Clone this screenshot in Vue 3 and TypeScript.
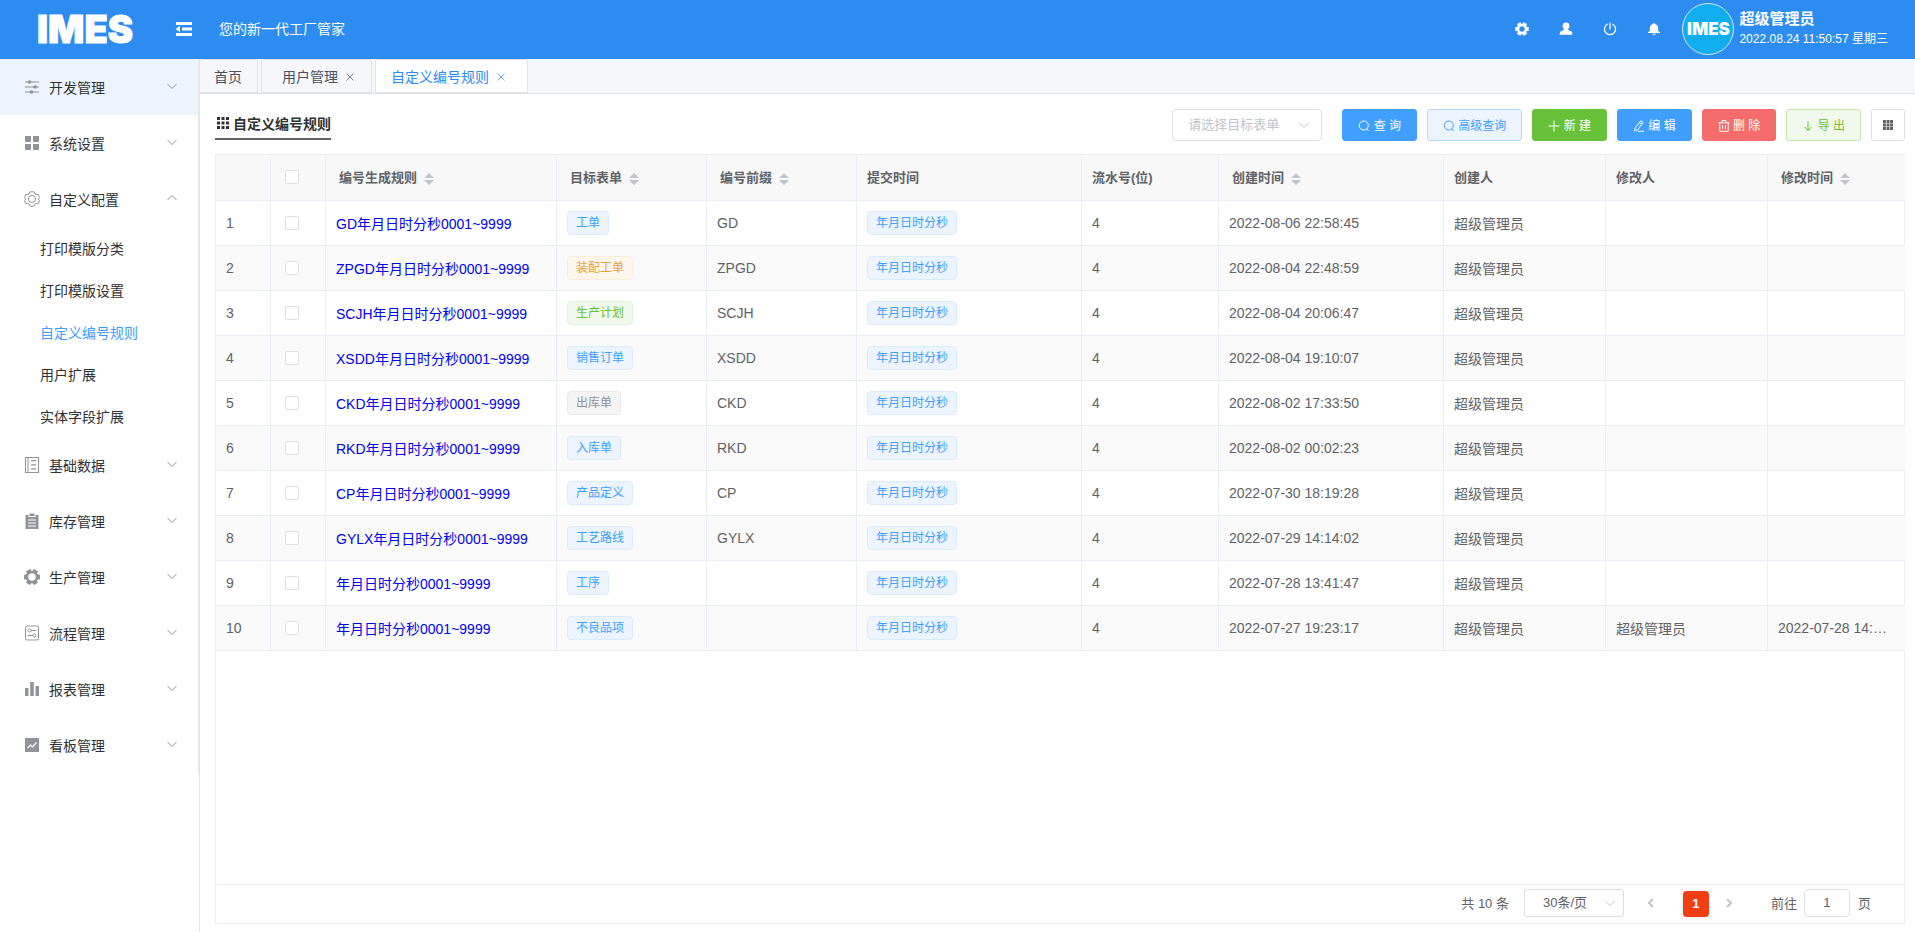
<script setup lang="ts">
import { ref } from 'vue'

interface Row {
  rule: string
  form: string
  kind: string
  prefix: string
  created: string
  modifier: string
  modified: string
}

interface MenuItem {
  label: string
  icon: string
  children?: string[]
}

const menu: MenuItem[] = [
  { label: '开发管理', icon: 'sliders' },
  { label: '系统设置', icon: 'tiles' },
  {
    label: '自定义配置',
    icon: 'gearLine',
    children: ['打印模版分类', '打印模版设置', '自定义编号规则', '用户扩展', '实体字段扩展'],
  },
  { label: '基础数据', icon: 'book' },
  { label: '库存管理', icon: 'clipboard' },
  { label: '生产管理', icon: 'gear' },
  { label: '流程管理', icon: 'flow' },
  { label: '报表管理', icon: 'bars' },
  { label: '看板管理', icon: 'board' },
]

const gearTeeth = [30, 90, 150, 210, 270, 330]

const columns = [
  { label: '编号生成规则', sortable: true },
  { label: '目标表单', sortable: true },
  { label: '编号前缀', sortable: true },
  { label: '提交时间', sortable: false },
  { label: '流水号(位)', sortable: false },
  { label: '创建时间', sortable: true },
  { label: '创建人', sortable: false },
  { label: '修改人', sortable: false },
  { label: '修改时间', sortable: true },
]

const make = (prefix: string, rule: string, form: string, kind: string, created: string, modifier = '', modified = ''): Row => ({
  prefix, rule, form, kind, created, modifier, modified,
})

const rows: Row[] = [
  make('GD', 'GD年月日时分秒0001~9999', '工单', 'primary', '2022-08-06 22:58:45'),
  make('ZPGD', 'ZPGD年月日时分秒0001~9999', '装配工单', 'warning', '2022-08-04 22:48:59'),
  make('SCJH', 'SCJH年月日时分秒0001~9999', '生产计划', 'success', '2022-08-04 20:06:47'),
  make('XSDD', 'XSDD年月日时分秒0001~9999', '销售订单', 'primary', '2022-08-04 19:10:07'),
  make('CKD', 'CKD年月日时分秒0001~9999', '出库单', 'info', '2022-08-02 17:33:50'),
  make('RKD', 'RKD年月日时分秒0001~9999', '入库单', 'primary', '2022-08-02 00:02:23'),
  make('CP', 'CP年月日时分秒0001~9999', '产品定义', 'primary', '2022-07-30 18:19:28'),
  make('GYLX', 'GYLX年月日时分秒0001~9999', '工艺路线', 'primary', '2022-07-29 14:14:02'),
  make('', '年月日时分秒0001~9999', '工序', 'primary', '2022-07-28 13:41:47'),
  make('', '年月日时分秒0001~9999', '不良品项', 'primary', '2022-07-27 19:23:17', '超级管理员', '2022-07-28 14:…'),
]

const target = ref('')
const page = ref('1')
</script>

<template>
  <div class="app">
    <header class="top">
      <div class="logo">IMES</div>
      <button class="bare" aria-label="折叠菜单">
        <svg width="18" height="14" viewBox="0 0 18 14" fill="#fff">
          <path d="M1 0h16v3H1zM7 5.5h10v3H7zM1 11h16v3H1zM5 3.8v6.4L.5 7z" />
        </svg>
      </button>
      <span class="slogan">您的新一代工厂管家</span>
      <nav class="tools">
        <button class="bare" aria-label="设置">
          <svg width="14" height="14" viewBox="0 0 16 16">
            <g fill="#fff"><rect v-for="a in gearTeeth" :key="a" x="5.6" y="0.3" width="4.8" height="4" rx="0.8" :transform="`rotate(${a} 8 8)`" /></g>
            <circle cx="8" cy="8" r="4.5" fill="none" stroke="#fff" stroke-width="2.8" />
          </svg>
        </button>
        <button class="bare" aria-label="用户">
          <svg width="14" height="14" viewBox="0 0 14 14" fill="#fff">
            <circle cx="7" cy="4" r="3.4" /><path d="M5 6.5h4l.4 1.6 3 1.5c.7.4.9 1.4.9 3.2H.7c0-1.8.2-2.8.9-3.2l3-1.5z" />
          </svg>
        </button>
        <button class="bare" aria-label="退出">
          <svg width="14" height="14" viewBox="0 0 14 14" fill="none" stroke="#fff" stroke-width="1.2" stroke-linecap="round">
            <path d="M7 .8v6.4M4.200 2.200a5.600 5.600 0 1 0 5.600 0" />
          </svg>
        </button>
        <button class="bare" aria-label="消息">
          <svg width="14" height="14" viewBox="0 0 14 14" fill="#fff">
            <path d="M6.300 1h1.400v1C10 2.300 11.200 4 11.200 6.200V9l1.800 1.200v.8H1v-.8L2.800 9V6.200C2.800 4 4 2.300 6.300 2zM5.300 11.800h3.400c-.2 1.600-3.200 1.600-3.400 0z" />
          </svg>
        </button>
      </nav>
      <div class="avatar">IMES</div>
      <div class="who">
        <strong>超级管理员</strong>
        <span>2022.08.24 11:50:57 星期三</span>
      </div>
    </header>

    <div class="body">
      <aside class="side">
        <ul class="menu">
          <li v-for="(m, i) in menu" :key="m.label">
            <button class="item" :class="{ hover: i === 0 }">
              <svg class="ico" width="16" height="16" viewBox="0 0 16 16" fill="#909399">
                <template v-if="m.icon === 'sliders'">
                  <path d="M1 2.500h14v1H1zM1 7.500h14v1H1zM1 12.500h14v1H1z" />
                  <circle cx="5.500" cy="3" r="1.800" /><circle cx="11" cy="8" r="1.800" /><circle cx="7.500" cy="13" r="1.800" />
                </template>
                <path v-else-if="m.icon === 'tiles'" d="M1 1h6v6H1zM9 1h6v6H9zM1 9h6v6H1zM9 9h6v6H9z" />
                <g v-else-if="m.icon === 'gearLine'" fill="none" stroke="#909399">
                  <path d="M6 .8h4l.8 1.900 1.500.9 2-.2 1.200 3.100L14.300 8l1.200 1.500-1.200 3.100-2-.2-1.500.9-.8 1.900H6l-.8-1.900-1.500-.9-2 .2L.5 9.500 1.700 8 .5 6.500l1.200-3.100 2 .2 1.500-.9z" stroke-linejoin="round" />
                  <circle cx="8" cy="8" r="3.500" />
                </g>
                <path v-else-if="m.icon === 'book'" fill-rule="evenodd" d="M1 0h14v16H1zM2 1v14h1.500V1zM4.500 1v14H14V1zM7 3h5v1.200H7zM7 7.200h5v1.200H7zM7 11.200h5v1.200H7z" />
                <path v-else-if="m.icon === 'clipboard'" fill-rule="evenodd" d="M1.500 2h3v2h7V2h3v14h-13zM5.500.5h5V3h-5zM4 6.500v1h8v-1zM4 9.500v1h8v-1zM4 12.500v1h8v-1z" />
                <g v-else-if="m.icon === 'gear'">
                  <rect v-for="a in gearTeeth" :key="a" x="5.500" y="0" width="5" height="4" rx="0.800" :transform="`rotate(${a} 8 8)`" />
                  <circle cx="8" cy="8" r="5" fill="none" stroke="#909399" stroke-width="2.600" />
                </g>
                <g v-else-if="m.icon === 'flow'" fill="none" stroke="#909399">
                  <rect x="1.500" y="1" width="13" height="14" rx="1.500" />
                  <circle cx="5.500" cy="5.500" r="1.500" /><circle cx="10.500" cy="10.500" r="1.500" />
                  <path d="M7 5.500h5.500M3.500 10.500H9" />
                </g>
                <path v-else-if="m.icon === 'bars'" d="M1 7h3.500v8H1zM6.200 1h3.600v14H6.200zM11.500 5H15v10h-3.500z" />
                <template v-else>
                  <path d="M1 1h14v14H1z" />
                  <path d="M3.500 11l3-3 2 2 4-4.500" fill="none" stroke="#fff" stroke-width="1.200" />
                </template>
              </svg>
              <span>{{ m.label }}</span>
              <svg class="arrow" width="10" height="10" viewBox="0 0 10 10" fill="none" stroke="#909399">
                <path :d="m.children ? 'M.5 7L5 2.500 9.500 7' : 'M.5 3L5 7.500 9.500 3'" />
              </svg>
            </button>
            <ul v-if="m.children" class="sub">
              <li v-for="c in m.children" :key="c"><a href="#" :class="{ on: c === '自定义编号规则' }">{{ c }}</a></li>
            </ul>
          </li>
        </ul>
      </aside>

      <main class="main">
        <nav class="tabs">
          <a href="#" class="tab home">首页</a>
          <a href="#" class="tab">用户管理<svg width="8" height="8" viewBox="0 0 8 8" stroke="currentColor"><path d="M.5.5l7 7M7.500.5l-7 7" /></svg></a>
          <a href="#" class="tab on">自定义编号规则<svg width="8" height="8" viewBox="0 0 8 8" stroke="currentColor"><path d="M.5.5l7 7M7.500.5l-7 7" /></svg></a>
        </nav>

        <section class="content">
          <div class="bar">
            <h1>
              <svg width="12" height="12" viewBox="0 0 12 12" fill="#303133"><path d="M0 0h3v3H0zM4.500 0h3v3h-3zM9 0h3v3H9zM0 4.500h3v3H0zM4.500 4.500h3v3h-3zM9 4.500h3v3H9zM0 9h3v3H0zM4.500 9h3v3h-3zM9 9h3v3H9z" /></svg>自定义编号规则
            </h1>
            <label class="pick">
              <select v-model="target" aria-label="目标表单">
                <option value="">请选择目标表单</option>
                <option v-for="r in rows" :key="r.form">{{ r.form }}</option>
              </select>
              <svg width="12" height="12" viewBox="0 0 12 12" fill="none" stroke="#c0c4cc"><path d="M1 3.500l5 5 5-5" /></svg>
            </label>
            <div class="actions">
              <button class="btn blue"><svg width="12" height="12" viewBox="0 0 12 12"><circle cx="5.800" cy="5.500" r="4.500" /><path d="M8.800 8.800l1.800 2.200" /></svg> 查 询</button>
              <button class="btn plain"><svg width="12" height="12" viewBox="0 0 12 12"><circle cx="5.800" cy="5.500" r="4.500" /><path d="M8.800 8.800l1.800 2.200" /></svg> 高级查询</button>
              <button class="btn green"><svg width="12" height="12" viewBox="0 0 12 12"><path d="M6 .5v11M.5 6h11" /></svg> 新 建</button>
              <button class="btn blue"><svg width="12" height="12" viewBox="0 0 12 12"><path d="M7.800.8l2.400 1.600-5.500 7.400-3 1.200.4-3zM6.500 2.600l2.400 1.600M5 11.300h6" /></svg> 编 辑</button>
              <button class="btn red"><svg width="12" height="12" viewBox="0 0 12 12"><path d="M.5 2.800h11M4 2.500v-2h4v2M1.800 3v8.300h8.400V3M4.600 5v4M7.400 5v4" /></svg> 删 除</button>
              <button class="btn mint"><svg width="12" height="12" viewBox="0 0 12 12"><path d="M6 1.500v9M2.500 7L6 10.500 9.500 7" /></svg> 导 出</button>
              <button class="btn grid" aria-label="列设置"><svg width="10" height="10" viewBox="0 0 12 12"><path d="M0 0h3.500v3.500H0zM4.300 0h3.500v3.500H4.300zM8.500 0H12v3.500H8.500zM0 4.300h3.500v3.500H0zM4.300 4.300h3.500v3.500H4.300zM8.500 4.300H12v3.500H8.500zM0 8.500h3.500V12H0zM4.300 8.500h3.500V12H4.300zM8.500 8.500H12V12H8.500z" /></svg></button>
            </div>
          </div>

          <div class="panel">
            <div class="scroll">
              <table>
                <colgroup>
                  <col class="w55"><col class="w55"><col class="w231"><col class="w150"><col class="w150"><col class="w225">
                  <col class="w137"><col class="w225"><col class="w162"><col class="w162"><col class="w137">
                </colgroup>
                <thead>
                  <tr>
                    <th></th>
                    <th class="chk"><input type="checkbox" aria-label="全选"></th>
                    <th v-for="c in columns" :key="c.label" :class="{ sortable: c.sortable }">
                      {{ c.label }}<svg v-if="c.sortable" width="10" height="12" viewBox="0 0 10 12" fill="#c0c4cc"><path d="M0 5l5-5 5 5zM0 7h10l-5 5z" /></svg>
                    </th>
                  </tr>
                </thead>
                <tbody>
                  <tr v-for="(r, i) in rows" :key="i">
                    <td>{{ i + 1 }}</td>
                    <td class="chk"><input type="checkbox" :aria-label="`选择第${i + 1}行`"></td>
                    <td><a href="#" class="link">{{ r.rule }}</a></td>
                    <td><span class="tag" :class="r.kind">{{ r.form }}</span></td>
                    <td>{{ r.prefix }}</td>
                    <td><span class="tag primary">年月日时分秒</span></td>
                    <td>4</td>
                    <td>{{ r.created }}</td>
                    <td>超级管理员</td>
                    <td>{{ r.modifier }}</td>
                    <td>{{ r.modified }}</td>
                  </tr>
                </tbody>
              </table>
            </div>
            <footer class="pager">
              <span class="total">共 10 条</span>
              <label class="size">
                <select aria-label="每页条数"><option>30条/页</option><option>50条/页</option></select>
                <svg width="10" height="10" viewBox="0 0 10 10" fill="none" stroke="#c0c4cc"><path d="M.5 3L5 7.500 9.500 3" /></svg>
              </label>
              <button class="step" aria-label="上一页"><svg width="10" height="10" viewBox="0 0 10 10"><path d="M7 1L3 5l4 4" /></svg></button>
              <button class="num">1</button>
              <button class="step" aria-label="下一页"><svg width="10" height="10" viewBox="0 0 10 10"><path d="M3 1l4 4-4 4" /></svg></button>
              <label class="jump">前往<input v-model="page" type="text">页</label>
            </footer>
          </div>
        </section>
      </main>
    </div>
  </div>
</template>

<style>
body {
  margin: 0;
}
</style>

<style scoped>
* {
  box-sizing: border-box;
}

.app {
  display: flex;
  flex-direction: column;
  min-height: 100vh;
  background: #fff;
  color: #606266;
  font-family: "Liberation Sans", "Noto Sans CJK SC", sans-serif;
  font-size: 14px;
}

button,
input,
select {
  font-family: inherit;
}

button {
  cursor: pointer;
}

a {
  text-decoration: none;
}

ul {
  margin: 0;
  padding: 0;
  list-style: none;
}

.top {
  display: flex;
  align-items: center;
  height: 59px;
  padding: 0 27px 2px 37px;
  background: #2d8cf0;
  color: #fff;
}

.logo {
  width: 138px;
  font: 900 38px/56px Inter, sans-serif;
  -webkit-text-stroke: 1px #fff;
}

.bare {
  display: flex;
  padding: 0;
  border: 0;
  background: none;
}

.slogan {
  margin-left: 26px;
  padding-bottom: 2px;
}

.tools {
  display: flex;
  gap: 30px;
  margin-left: auto;
}

.avatar {
  width: 52px;
  height: 52px;
  margin: 0 5px 0 21px;
  border: 1px solid #cfe9fb;
  border-radius: 50%;
  background: #10aeef;
  font: 900 17px/50px Inter, sans-serif;
  text-align: center;
}

.who {
  display: flex;
  flex-direction: column;
  font-size: 12px;
  line-height: 20px;
}

.who strong {
  font-size: 15px;
}

.body {
  display: flex;
  flex: 1;
}

.side {
  width: 199px;
  flex: none;
}

.menu {
  border-right: 1px solid #e6e6e6;
}

.item {
  display: flex;
  align-items: center;
  width: 100%;
  height: 56px;
  padding: 0 21px 0 24px;
  border: 0;
  background: none;
  color: #303133;
  font-size: 14px;
}

.item.hover {
  background: #ecf5ff;
}

.ico {
  margin-right: 9px;
}

.arrow {
  margin: 0 0 2px auto;
}

.sub a {
  display: block;
  padding: 2px 0 0 40px;
  color: #303133;
  line-height: 40px;
}

.sub .on {
  color: #409eff;
}

.main {
  display: flex;
  flex: 1;
  flex-direction: column;
  min-width: 0;
  border-left: 1px solid #e6e6e6;
}

.tabs {
  display: flex;
  gap: 3px;
  height: 35px;
  border-bottom: 1px solid #dfe3e9;
  background: #f5f7fa;
}

.tab {
  display: flex;
  align-items: center;
  height: 34px;
  padding: 0 17px 0 20px;
  border: 1px solid #dfe3e9;
  border-radius: 3px 3px 0 0;
  background: #f5f7fa;
  color: #495060;
}

.tab.home {
  padding: 0 15px 0 14px;
  border-left: 0;
}

.tab.on {
  padding: 0 22px 0 15px;
  background: #fff;
  color: #2d8cf0;
}

.tab svg {
  margin: 2px 0 0 8px;
  opacity: 0.7;
}

.content {
  display: flex;
  flex: 1;
  flex-direction: column;
  padding: 15px 10px 8px 15px;
}

.bar {
  display: flex;
  align-items: flex-start;
  height: 45px;
}

h1 {
  display: flex;
  align-items: center;
  gap: 4px;
  height: 31px;
  margin: 0 auto 0 0;
  padding: 0 0 2px 2px;
  border-bottom: 2px solid #606266;
  color: #303133;
  font-size: 14px;
}

.pick,
.size {
  display: flex;
  align-items: center;
  border: 1px solid #dcdfe6;
  border-radius: 4px;
}

.pick {
  width: 150px;
  height: 32px;
  margin-right: 20px;
  padding-right: 11px;
}

select {
  flex: 1;
  height: 100%;
  min-width: 0;
  border: 0;
  background: none;
  appearance: none;
  font-size: 13px;
}

.pick select {
  padding: 0 0 2px 15px;
  color: #c0c4cc;
}

.actions {
  display: flex;
  gap: 10px;
}

.btn {
  height: 32px;
  padding: 0 15px 2px;
  border: 1px solid;
  border-radius: 3px;
  font-size: 12px;
  white-space: pre;
}

.btn svg {
  vertical-align: -2px;
  fill: none;
  stroke: currentColor;
}

.btn.blue {
  border-color: #409eff;
  background: #409eff;
  color: #fff;
}

.btn.plain {
  border-color: #b3d8ff;
  background: #ecf5ff;
  color: #409eff;
}

.btn.green {
  border-color: #67c23a;
  background: #67c23a;
  color: #fff;
}

.btn.red {
  border-color: #f56c6c;
  background: #f56c6c;
  color: #fff;
}

.btn.mint {
  border-color: #c2e7b0;
  background: #f0f9eb;
  color: #67c23a;
}

.btn.grid {
  padding: 0 11px;
  border-color: #dcdfe6;
  background: #fff;
  color: #606266;
}

.btn.grid svg {
  fill: currentColor;
  stroke: none;
  vertical-align: -1px;
}

.panel {
  display: flex;
  flex: 1;
  flex-direction: column;
  border: 1px solid #ebeef5;
}

.scroll {
  flex: 1;
}

table {
  width: 100%;
  border-collapse: separate;
  border-spacing: 0;
  table-layout: fixed;
}

.w55 { width: 55px; }
.w137 { width: 137px; }
.w150 { width: 150px; }
.w162 { width: 162px; }
.w225 { width: 225px; }
.w231 { width: 231px; }

th,
td {
  overflow: hidden;
  height: 45px;
  padding: 0 10px;
  border-right: 1px solid #ebeef5;
  border-bottom: 1px solid #ebeef5;
  text-align: left;
  text-overflow: ellipsis;
  white-space: nowrap;
}

th {
  height: 46px;
  padding-bottom: 2px;
  background: #f8f8f9;
  font-size: 13px;
}

th:last-child,
td:last-child {
  border-right: 0;
}

th.sortable {
  padding-left: 13px;
}

th svg {
  margin-left: 7px;
  vertical-align: -3px;
}

tbody tr:nth-child(even) {
  background: #fafafa;
}

.chk {
  padding-left: 14px;
}

.chk input {
  display: block;
  width: 14px;
  height: 14px;
  margin: 0;
  border: 1px solid #dcdfe6;
  border-radius: 2px;
  background: #fff;
  appearance: none;
}

.link {
  color: #0000ee;
}

.tag {
  display: inline-block;
  height: 24px;
  padding: 0 8px;
  border: 1px solid;
  border-radius: 4px;
  font-size: 12px;
  line-height: 22px;
  vertical-align: middle;
}

.tag.primary {
  border-color: #d9ecff;
  background: #ecf5ff;
  color: #409eff;
}

.tag.warning {
  border-color: #faecd8;
  background: #fdf6ec;
  color: #e6a23c;
}

.tag.success {
  border-color: #e1f3d8;
  background: #f0f9eb;
  color: #67c23a;
}

.tag.info {
  border-color: #e9e9eb;
  background: #f4f4f5;
  color: #909399;
}

.pager {
  display: flex;
  align-items: center;
  justify-content: flex-end;
  height: 39px;
  padding: 0 33px 3px 0;
  border-top: 1px solid #ebeef5;
  font-size: 13px;
}

.size {
  width: 100px;
  height: 28px;
  margin: 0 18px 0 15px;
  padding-right: 8px;
  border-radius: 3px;
}

.size select {
  padding: 0 0 0 18px;
  color: #606266;
}

.step {
  display: flex;
  padding: 4px;
  border: 0;
  background: none;
}

.step path {
  fill: none;
  stroke: #c0c4cc;
  stroke-width: 2;
}

.num {
  width: 26px;
  height: 26px;
  margin: 2px 11px 0 23px;
  padding: 0;
  border: 0;
  border-radius: 4px;
  background: #f03f14;
  box-shadow: 0 0 2px #c0c4cc;
  color: #fff;
  font-size: 13px;
  font-weight: 700;
}

.jump {
  display: flex;
  align-items: center;
  margin-left: 33px;
}

.jump input {
  width: 46px;
  height: 28px;
  margin: 0 8px 0 7px;
  padding: 0;
  border: 1px solid #dcdfe6;
  border-radius: 4px;
  color: #606266;
  font-size: 13px;
  text-align: center;
}
</style>
